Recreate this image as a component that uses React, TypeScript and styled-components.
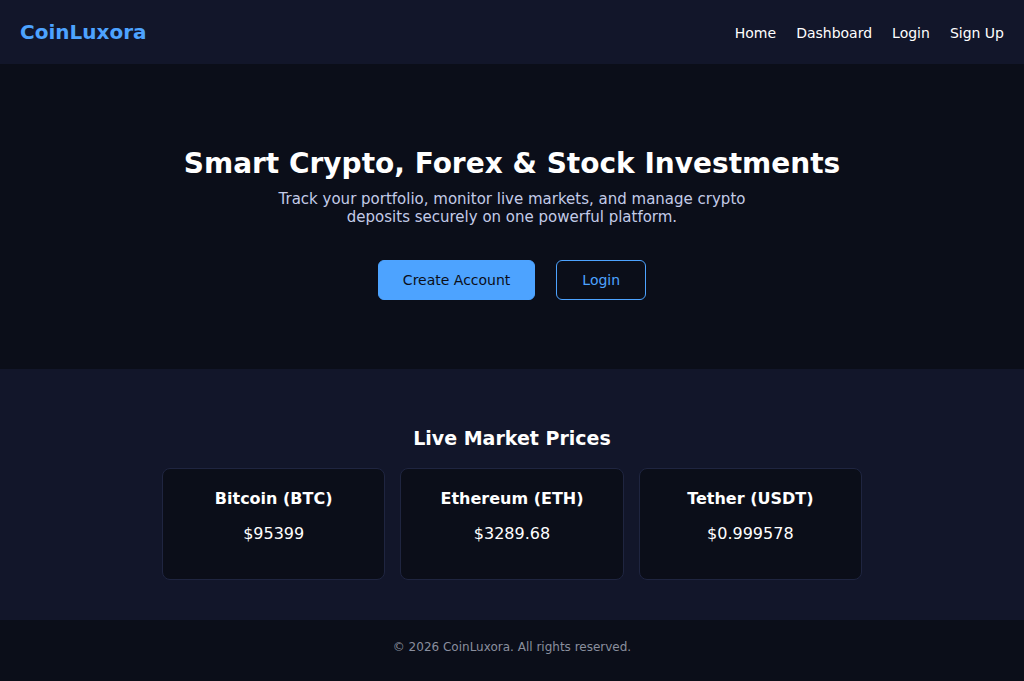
import React from "react";
import styled, { createGlobalStyle } from "styled-components";

const Global = createGlobalStyle`
  html, body { margin: 0; padding: 0; }
  body {
    background: #0b0e19;
    color: #ffffff;
    font-family: "DejaVu Sans", Verdana, sans-serif;
  }
  * { box-sizing: border-box; }
`;

const Nav = styled.header`
  height: 64px;
  background: #12162a;
  display: flex;
  align-items: center;
  justify-content: space-between;
  padding: 0 20px;
`;

const Logo = styled.div`
  color: #4da3ff;
  font-weight: bold;
  font-size: 20px;
`;

const Links = styled.nav`
  display: flex;
  gap: 20px;
  padding-top: 2px;
`;

const NavLink = styled.a`
  color: #ffffff;
  font-size: 14px;
  text-decoration: none;
`;

const Hero = styled.section`
  background: #0b0e19;
  height: 305px;
  display: flex;
  flex-direction: column;
  align-items: center;
  padding-top: 83px;
  text-align: center;
`;

const Title = styled.h1`
  margin: 0;
  font-size: 28px;
  font-weight: bold;
`;

const Subtitle = styled.p`
  margin: 10px 0 0;
  max-width: 500px;
  font-size: 15px;
  line-height: 18px;
  color: #c3cbe8;
`;

const Actions = styled.div`
  margin-top: 34px;
  display: flex;
  gap: 21px;
`;

const Button = styled.button<{ $outline?: boolean }>`
  height: 40px;
  padding: 0 ${(p) => (p.$outline ? "25px" : "24px")};
  border-radius: 6px;
  font-family: inherit;
  font-size: 14px;
  cursor: pointer;
  background: ${(p) => (p.$outline ? "transparent" : "#4da3ff")};
  color: ${(p) => (p.$outline ? "#4da3ff" : "#0b0e19")};
  border: 1px solid #4da3ff;
`;

const Markets = styled.section`
  background: #12162a;
  height: 251px;
  display: flex;
  flex-direction: column;
  align-items: center;
  padding-top: 58px;
`;

const SectionTitle = styled.h2`
  margin: 0;
  font-size: 19px;
  font-weight: bold;
`;

const Cards = styled.div`
  margin-top: 19px;
  width: 700px;
  display: grid;
  grid-template-columns: repeat(3, 1fr);
  gap: 15px;
`;

const Card = styled.div`
  height: 112px;
  background: #0b0e19;
  border: 1px solid #1f2540;
  border-radius: 8px;
  display: flex;
  flex-direction: column;
  align-items: center;
  padding-top: 20px;
`;

const CardName = styled.div`
  font-size: 16px;
  font-weight: bold;
`;

const Price = styled.div`
  margin-top: 16px;
  font-size: 16px;
`;

const Footer = styled.footer`
  background: #0b0e19;
  padding: 20px 0 23px;
  text-align: center;
  font-size: 12px;
  line-height: 15px;
  color: #8a8f9e;
`;

const coins = [
  { name: "Bitcoin (BTC)", price: "$95399" },
  { name: "Ethereum (ETH)", price: "$3289.68" },
  { name: "Tether (USDT)", price: "$0.999578" },
];

export default function App() {
  return (
    <>
      <Global />
      <Nav>
        <Logo>CoinLuxora</Logo>
        <Links>
          <NavLink href="#">Home</NavLink>
          <NavLink href="#">Dashboard</NavLink>
          <NavLink href="#">Login</NavLink>
          <NavLink href="#">Sign Up</NavLink>
        </Links>
      </Nav>
      <Hero>
        <Title>Smart Crypto, Forex &amp; Stock Investments</Title>
        <Subtitle>
          Track your portfolio, monitor live markets, and manage crypto deposits securely on one powerful platform.
        </Subtitle>
        <Actions>
          <Button>Create Account</Button>
          <Button $outline>Login</Button>
        </Actions>
      </Hero>
      <Markets>
        <SectionTitle>Live Market Prices</SectionTitle>
        <Cards>
          {coins.map((c) => (
            <Card key={c.name}>
              <CardName>{c.name}</CardName>
              <Price>{c.price}</Price>
            </Card>
          ))}
        </Cards>
      </Markets>
      <Footer>© 2026 CoinLuxora. All rights reserved.</Footer>
    </>
  );
}
